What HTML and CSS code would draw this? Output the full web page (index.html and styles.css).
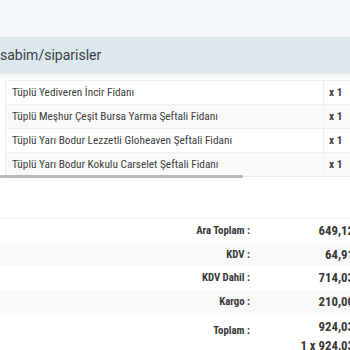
FILE: index.html
```html
<!DOCTYPE html>
<html lang="tr">
<head>
<meta charset="utf-8">
<link rel="stylesheet" href="styles.css">
</head>
<body>
<div class="page">
  <div class="top"></div>
  <div class="crumb">sabim/siparisler</div>
  <div class="items">
    <div class="scroller">
      <table class="order">
        <tr><td class="name">Tüplü Yediveren İncir Fidanı</td><td class="qty">x 1</td></tr>
        <tr class="alt"><td class="name">Tüplü Meşhur Çeşit Bursa Yarma Şeftali Fidanı</td><td class="qty">x 1</td></tr>
        <tr><td class="name">Tüplü Yarı Bodur Lezzetli Gloheaven Şeftali Fidanı</td><td class="qty">x 1</td></tr>
        <tr class="alt"><td class="name">Tüplü Yarı Bodur Kokulu Carselet Şeftali Fidanı</td><td class="qty">x 1</td></tr>
      </table>
    </div>
    <div class="thumb"></div>
  </div>
  <div class="totals">
    <div class="trow"><span class="lbl">Ara Toplam :</span><span class="val">649,12</span></div>
    <div class="trow alt"><span class="lbl">KDV :</span><span class="val">64,91</span></div>
    <div class="trow"><span class="lbl">KDV Dahil :</span><span class="val">714,03</span></div>
    <div class="trow alt"><span class="lbl">Kargo :</span><span class="val">210,00</span></div>
    <div class="trow big"><span class="lbl">Toplam :</span><span class="val"><span>924,03</span><span>1 x 924,03</span></span></div>
  </div>
</div>
</body>
</html>
```
FILE: styles.css
```css
html, body {
  margin: 0;
  padding: 0;
  background: #ffffff;
  overflow: hidden;
}
.page {
  width: 350px;
  height: 350px;
  overflow: hidden;
  font-family: "Roboto Condensed", "Liberation Sans Narrow", "Roboto", sans-serif;
  color: #404040;
  font-size: 11.3px;
}
.top {
  height: 37px;
  background: #f4f8fb;
}
.crumb {
  height: 36px;
  line-height: 36px;
  background: #dde7ee;
  font-family: "Roboto", sans-serif;
  font-size: 14px;
  color: #3a3f44;
  white-space: nowrap;
}
.items {
  padding-top: 7px;
  background: linear-gradient(#eef0f2, #ffffff 7px);
}
.scroller {
  margin-left: 5px;
  width: 360px;
}
.order {
  border-collapse: collapse;
  width: 360px;
  border-left: 1px solid #ececec;
  border-bottom: 1px solid #ececec;
}
.order td {
  height: 23px;
  padding: 0 6px;
  border-top: 1px solid #efefef;
  white-space: nowrap;
}
.order .name {
  width: 305px;
}
.order .qty {
  border-left: 1px solid #efefef;
  font-weight: bold;
  padding-left: 5px;
}
.order tr.alt td {
  background: #f9f9f9;
}
.thumb {
  width: 243px;
  height: 3px;
  margin-top: -2px;
  background: #b9b9b9;
  border-radius: 1px;
}
.totals {
  margin-top: 40px;
  border-top: 1px solid #efefef;
  width: 354px;
}
.trow {
  display: grid;
  grid-template-columns: 250px 1fr;
  align-items: center;
  height: 23.5px;
  font-weight: bold;
  color: #383838;
}
.trow.alt {
  background: #f9f9f9;
}
.lbl {
  text-align: right;
  font-size: 10.8px;
}
.val {
  text-align: right;
  font-size: 12.8px;
}
.trow.big {
  height: 38px;
  align-items: start;
}
.trow.big .lbl {
  padding-top: 11px;
  line-height: 14px;
}
.trow.big .val {
  display: flex;
  flex-direction: column;
  align-items: flex-end;
  gap: 5px;
  padding-top: 7px;
  line-height: 14px;
}
```
